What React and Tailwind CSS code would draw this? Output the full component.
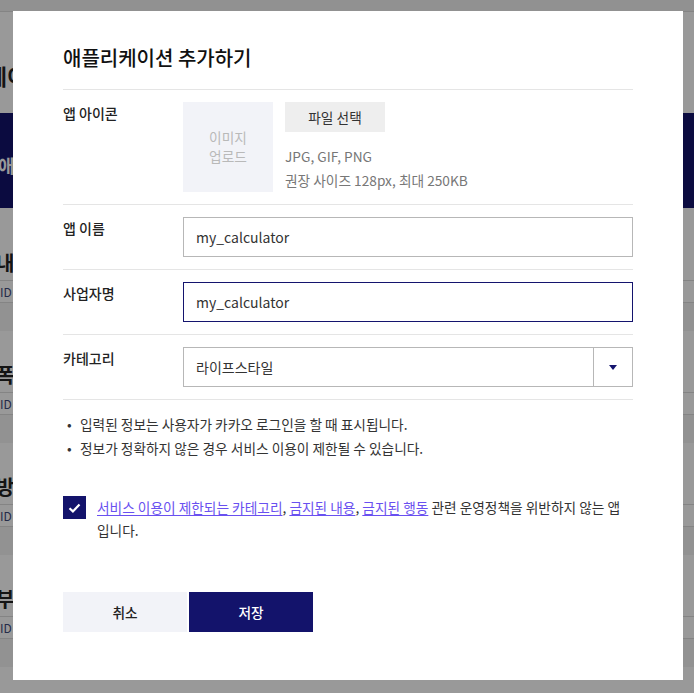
import React, { useState } from "react";

const font = "font-['Noto_Sans_CJK_KR','Noto_Sans',sans-serif]";

const apps = [
    { name: "내 계산기", id: "ID 812334" },
    { name: "폭탄 게임", id: "ID 812301" },
    { name: "방탈출 카페", id: "ID 812277" },
    { name: "부동산 정보", id: "ID 812190" },
];

const BackgroundPage = () => (
    <div className={`min-h-screen bg-white overflow-hidden ${font}`}>
        <div className="h-[12px] bg-[#f2f2f2] border-b border-[#dddddd]" />
        <div className="-ml-[74px] mt-[48px] text-[22px] leading-[30px] font-bold text-[#222]">
            애플리케이션 관리
        </div>
        <div className="mt-[23px] h-[95px] bg-[#13136b] flex items-center pt-[10px]">
            <span className="-ml-[2px] text-[18px] font-bold text-white">
                애<span className="text-[#6f7bd8]">플</span>리케이션 등록
            </span>
        </div>
        {apps.map((app, i) => (
            <div key={app.id}>
                <div
                    className={`${i === 0 ? "mt-[43px]" : "mt-[32px]"} -ml-[4px] mb-[5px] text-[20px] leading-[24px] font-bold text-[#222]`}
                >
                    {app.name}
                </div>
                <div className="h-[23px] border-y border-[#dddddd] flex items-center text-[12px] text-[#3d4a7a]">
                    {app.id}
                </div>
                <div className="h-[28px] bg-[#f3f3f3]" />
            </div>
        ))}
    </div>
);

const Row = ({ label, children }) => (
    <div className="flex py-[12px] border-b border-[#e5e5e5]">
        <div className="w-[120px] shrink-0 pt-[1px] text-[14px] leading-[20px] font-medium text-[#222]">
            {label}
        </div>
        <div className="flex-1">{children}</div>
    </div>
);

const TextInput = ({ value, focused }) => (
    <div
        className={`h-[40px] flex items-center px-[12px] border text-[14px] text-[#333] ${
            focused ? "border-[#14146e]" : "border-[#b7b7b7]"
        }`}
    >
        {value}
    </div>
);

const AddAppModal = () => {
    const [agreed, setAgreed] = useState(true);

    return (
        <div className={`w-[670px] bg-white px-[50px] pt-[34px] pb-[48px] ${font}`}>
            <h2 className="pb-[18px] border-b border-[#e5e5e5] text-[20px] leading-[26px] font-medium text-[#111]">
                애플리케이션 추가하기
            </h2>

            <Row label="앱 아이콘">
                <div className="flex gap-[12px]">
                    <div className="w-[90px] h-[90px] bg-[#f2f3f8] flex items-center justify-center text-center text-[13.7px] leading-[19px] text-[#b9b9b9]">
                        이미지
                        <br />
                        업로드
                    </div>
                    <div>
                        <button className="w-[100px] h-[30px] bg-[#eeeeee] text-[13.7px] text-[#333]">
                            파일 선택
                        </button>
                        <div className="mt-[12px] text-[13.7px] leading-[24px] text-[#777]">
                            <p>JPG, GIF, PNG</p>
                            <p>권장 사이즈 128px, 최대 250KB</p>
                        </div>
                    </div>
                </div>
            </Row>

            <Row label="앱 이름">
                <TextInput value="my_calculator" />
            </Row>

            <Row label="사업자명">
                <TextInput value="my_calculator" focused />
            </Row>

            <Row label="카테고리">
                <div className="h-[40px] flex border border-[#b7b7b7] text-[14px] text-[#333]">
                    <div className="flex-1 flex items-center px-[12px]">라이프스타일</div>
                    <div className="w-[39px] border-l border-[#b7b7b7] flex items-center justify-center">
                        <svg width="8" height="5" viewBox="0 0 8 5">
                            <path d="M0 0h8L4 5z" fill="#14146e" />
                        </svg>
                    </div>
                </div>
            </Row>

            <ul className="pt-[12px] text-[13.7px] leading-[24px] text-[#333]">
                <li className="flex">
                    <span className="w-[17px] pl-[4px]">•</span>
                    입력된 정보는 사용자가 카카오 로그인을 할 때 표시됩니다.
                </li>
                <li className="flex">
                    <span className="w-[17px] pl-[4px]">•</span>
                    정보가 정확하지 않은 경우 서비스 이용이 제한될 수 있습니다.
                </li>
            </ul>

            <div className="mt-[36px] flex gap-[11px]">
                <button
                    onClick={() => setAgreed(!agreed)}
                    className={`w-[23px] h-[23px] shrink-0 flex items-center justify-center ${
                        agreed ? "bg-[#13136b]" : "border border-[#b7b7b7] bg-white"
                    }`}
                >
                    {agreed && (
                        <svg width="13" height="10" viewBox="0 0 13 10" fill="none">
                            <path d="M1.5 5.2l3.4 3.2L11.5 1.6" stroke="white" strokeWidth="2.2" />
                        </svg>
                    )}
                </button>
                <p className="text-[13.7px] leading-[23px] text-[#333]">
                    <span className="whitespace-nowrap">
                        <a className="text-[#6950f0] underline underline-offset-2">서비스 이용이 제한되는 카테고리</a>,{" "}
                        <a className="text-[#6950f0] underline underline-offset-2">금지된 내용</a>,{" "}
                        <a className="text-[#6950f0] underline underline-offset-2">금지된 행동</a> 관련 운영정책을 위반하지 않는 앱
                    </span>
                    <br />
                    입니다.
                </p>
            </div>

            <div className="mt-[50px] flex gap-[2px]">
                <button className="w-[124px] h-[40px] bg-[#f2f3f8] text-[13.7px] font-medium text-[#222]">
                    취소
                </button>
                <button className="w-[124px] h-[40px] bg-[#13136b] text-[13.7px] font-medium text-white">
                    저장
                </button>
            </div>
        </div>
    );
};

export default function App() {
    return (
        <div className="relative">
            <BackgroundPage />
            <div className="fixed inset-0 bg-black/40 flex justify-center items-start pt-[11px] pl-[2px]">
                <AddAppModal />
            </div>
        </div>
    );
}
